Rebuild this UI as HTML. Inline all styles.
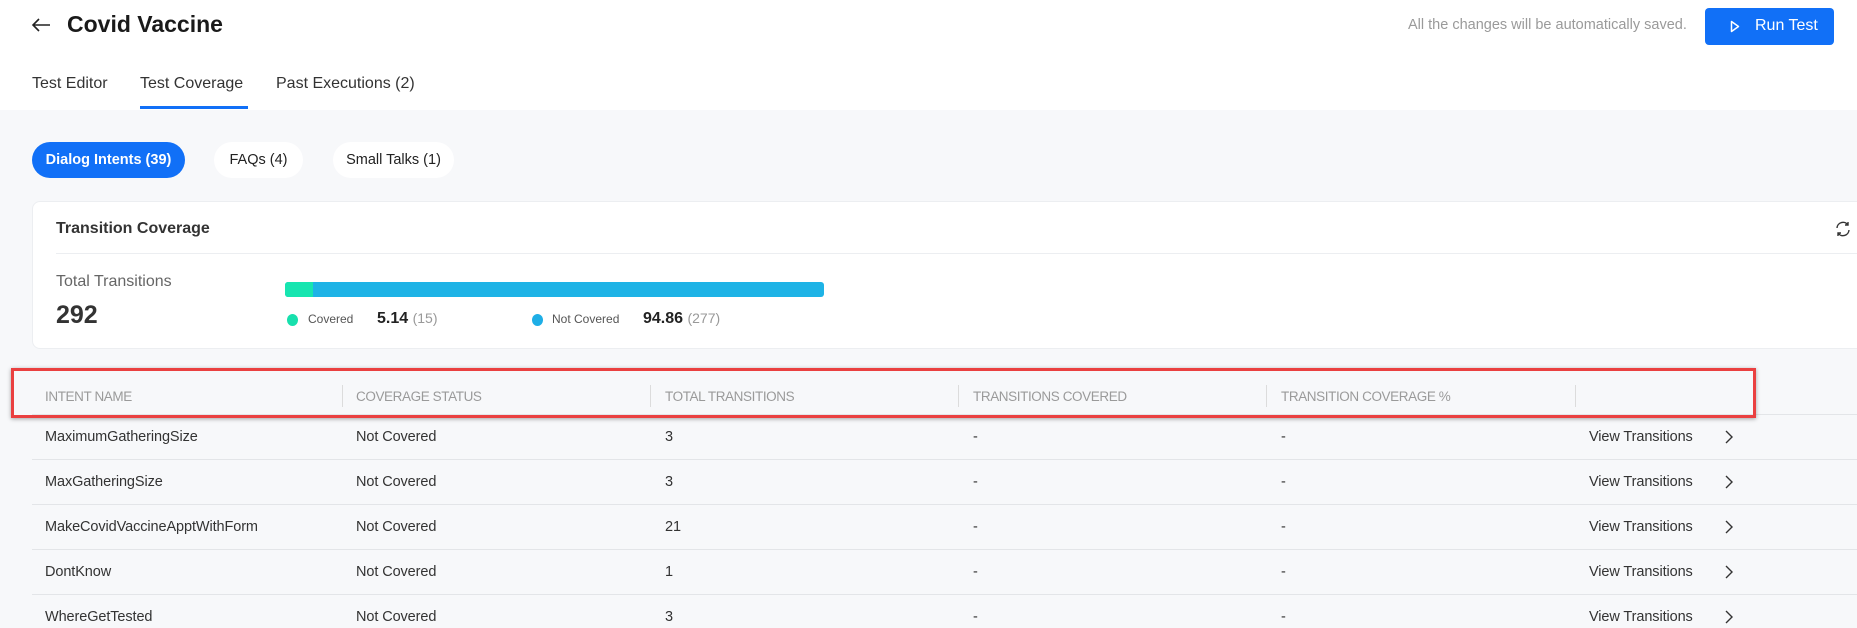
<!DOCTYPE html>
<html><head><style>
*{box-sizing:border-box;margin:0;padding:0}
body{width:1857px;height:628px;overflow:hidden;background:#f7f8fa;font-family:"Liberation Sans",sans-serif;color:#222;position:relative}
.abs{position:absolute;white-space:nowrap}
.top{position:absolute;left:0;top:0;width:1857px;height:110px;background:#fff}
.pill{position:absolute;top:142px;height:36px;border-radius:18px;font-size:14.5px;display:flex;align-items:center;justify-content:center}
.card{position:absolute;left:32px;top:201px;width:1840px;height:148px;background:#fff;border-radius:8px;border:1px solid #eceef1}
.hd{position:absolute;top:389px;font-size:13.5px;color:#9a9a9a;letter-spacing:-0.4px}
.dv{position:absolute;top:385px;width:1px;height:22px;background:#dcdcdc}
.row{position:absolute;left:32px;width:1825px;height:1px;background:#e3e5e8}
.c{position:absolute;font-size:14.5px;color:#333;white-space:nowrap;letter-spacing:-0.1px}
</style></head><body>
<div class="top"></div>
<svg class="abs" style="left:31px;top:18px" width="20" height="14" viewBox="0 0 20 14"><path d="M19 7H2M8 1L2 7l6 6" stroke="#222" stroke-width="1.6" fill="none"/></svg>
<div class="abs" style="left:67px;top:11px;font-size:23px;font-weight:bold;color:#1a1a1a">Covid Vaccine</div>
<div class="abs" style="left:1408px;top:17px;font-size:14.5px;color:#9a9a9a">All the changes will be automatically saved.</div>
<div class="abs" style="left:1705px;top:8px;width:129px;height:37px;background:#1170f7;border-radius:4px;color:#fff;font-size:16px">
<svg style="position:absolute;left:25px;top:12px" width="10" height="13" viewBox="0 0 10 13"><path d="M1.5 1.5L8.5 6.5L1.5 11.5Z" stroke="#fff" stroke-width="1.5" fill="none" stroke-linejoin="round"/></svg>
<span style="position:absolute;left:50px;top:9px">Run Test</span></div>
<div class="abs" style="left:32px;top:75px;font-size:16px;color:#333">Test Editor</div>
<div class="abs" style="left:140px;top:75px;font-size:16px;color:#333">Test Coverage</div>
<div class="abs" style="left:276px;top:75px;font-size:16px;color:#333">Past Executions (2)</div>
<div class="abs" style="left:140px;top:106px;width:108px;height:3px;background:#1170f7"></div>
<div class="pill" style="left:32px;width:153px;background:#1170f7;color:#fff;font-weight:bold">Dialog Intents (39)</div>
<div class="pill" style="left:214px;width:89px;background:#fff;color:#222">FAQs (4)</div>
<div class="pill" style="left:333px;width:121px;background:#fff;color:#222">Small Talks (1)</div>
<div class="card"></div>
<div class="abs" style="left:56px;top:220px;font-size:16px;font-weight:bold;color:#333">Transition Coverage</div>
<svg class="abs" style="left:1834px;top:220px" width="18" height="18" viewBox="0 0 18 18"><path d="M3 8a6 6 0 0 1 11-3M15 10a6 6 0 0 1-11 3M14 2v3h-3M4 16v-3h3" stroke="#333" stroke-width="1.4" fill="none"/></svg>
<div class="abs" style="left:56px;top:253px;width:1801px;height:1px;background:#eceef1"></div>
<div class="abs" style="left:56px;top:273px;font-size:16px;color:#666">Total Transitions</div>
<div class="abs" style="left:56px;top:301px;font-size:25px;font-weight:bold;color:#333">292</div>
<div class="abs" style="left:285px;top:282px;width:539px;height:15px;background:#1eb3e6;border-radius:3px;overflow:hidden"><div style="width:28px;height:15px;background:#17e5b0"></div></div>
<div class="abs" style="left:287px;top:314px;width:11px;height:12px;border-radius:50%;background:#17e0ad"></div>
<div class="abs" style="left:308px;top:312px;font-size:12px;color:#555">Covered</div>
<div class="abs" style="left:377px;top:310px;font-size:16px;font-weight:bold;color:#222">5.14 <span style="font-weight:normal;font-size:14px;color:#999">(15)</span></div>
<div class="abs" style="left:532px;top:314px;width:11px;height:12px;border-radius:50%;background:#1eaee6"></div>
<div class="abs" style="left:552px;top:312px;font-size:12px;color:#555">Not Covered</div>
<div class="abs" style="left:643px;top:310px;font-size:16px;font-weight:bold;color:#222">94.86 <span style="font-weight:normal;font-size:14px;color:#999">(277)</span></div>
<div class="abs" style="left:32px;top:414px;width:1825px;height:1px;background:#e3e5e8"></div>
<div class="hd" style="left:45px">INTENT NAME</div>
<div class="hd" style="left:356px">COVERAGE STATUS</div>
<div class="hd" style="left:665px">TOTAL TRANSITIONS</div>
<div class="hd" style="left:973px">TRANSITIONS COVERED</div>
<div class="hd" style="left:1281px">TRANSITION COVERAGE %</div>
<div class="dv" style="left:342px"></div><div class="dv" style="left:650px"></div><div class="dv" style="left:958px"></div><div class="dv" style="left:1266px"></div><div class="dv" style="left:1575px"></div>
<div class="abs" style="left:11px;top:368px;width:1745px;height:50px;border:3px solid #ea4040;box-shadow:0 1px 4px rgba(0,0,0,.35)"></div>

<div class="row" style="top:459px"></div><div class="row" style="top:504px"></div><div class="row" style="top:549px"></div><div class="row" style="top:594px"></div>

<div class="c" style="left:45px;top:429px">MaximumGatheringSize</div><div class="c" style="left:356px;top:429px">Not Covered</div><div class="c" style="left:665px;top:429px">3</div><div class="c" style="left:973px;top:429px">-</div><div class="c" style="left:1281px;top:429px">-</div><div class="c" style="left:1589px;top:429px">View Transitions</div>
<div class="c" style="left:45px;top:474px">MaxGatheringSize</div><div class="c" style="left:356px;top:474px">Not Covered</div><div class="c" style="left:665px;top:474px">3</div><div class="c" style="left:973px;top:474px">-</div><div class="c" style="left:1281px;top:474px">-</div><div class="c" style="left:1589px;top:474px">View Transitions</div>
<div class="c" style="left:45px;top:519px">MakeCovidVaccineApptWithForm</div><div class="c" style="left:356px;top:519px">Not Covered</div><div class="c" style="left:665px;top:519px">21</div><div class="c" style="left:973px;top:519px">-</div><div class="c" style="left:1281px;top:519px">-</div><div class="c" style="left:1589px;top:519px">View Transitions</div>
<div class="c" style="left:45px;top:564px">DontKnow</div><div class="c" style="left:356px;top:564px">Not Covered</div><div class="c" style="left:665px;top:564px">1</div><div class="c" style="left:973px;top:564px">-</div><div class="c" style="left:1281px;top:564px">-</div><div class="c" style="left:1589px;top:564px">View Transitions</div>
<div class="c" style="left:45px;top:609px">WhereGetTested</div><div class="c" style="left:356px;top:609px">Not Covered</div><div class="c" style="left:665px;top:609px">3</div><div class="c" style="left:973px;top:609px">-</div><div class="c" style="left:1281px;top:609px">-</div><div class="c" style="left:1589px;top:609px">View Transitions</div>

<svg class="abs" style="left:1724px;top:429px" width="10" height="199" viewBox="0 0 10 199">
<g stroke="#333" stroke-width="1.4" fill="none"><path d="M2 2l6 6-6 6"/><path d="M2 47l6 6-6 6"/><path d="M2 92l6 6-6 6"/><path d="M2 137l6 6-6 6"/><path d="M2 182l6 6-6 6"/></g></svg>
</body></html>
